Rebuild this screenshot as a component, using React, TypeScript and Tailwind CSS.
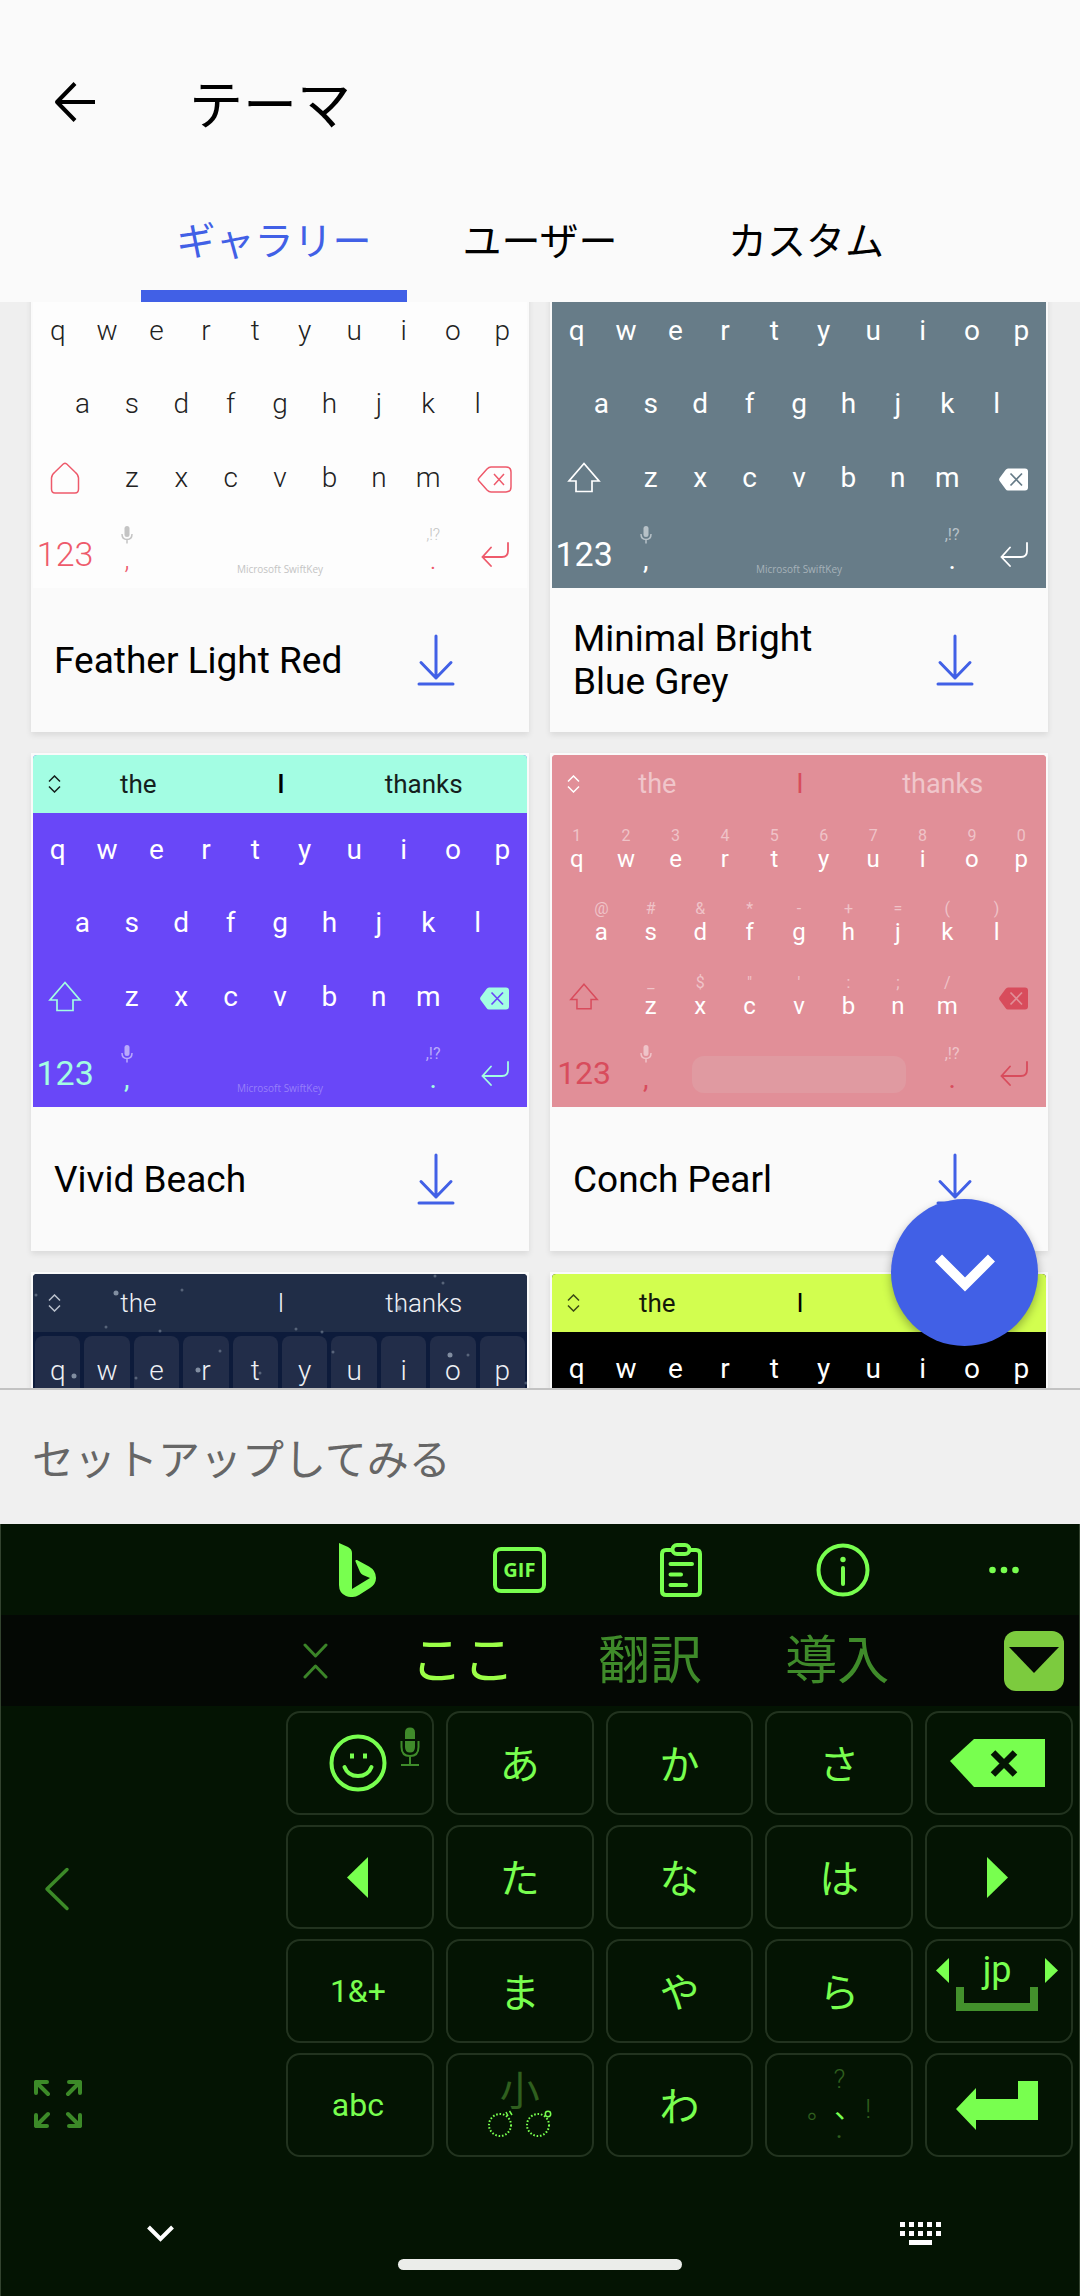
import type { ReactNode } from "react";

const latin = "font-[Roboto,'Noto_Sans_CJK_JP',sans-serif]";
const japanese = "font-['Noto_Sans_CJK_JP',Roboto,sans-serif]";

type Theme = {
  name: string;
  board: string;
  bar: string;
  keys: string;
  accent: string;
  candidate: string;
  middle: string;
  chevron: string;
  hint: string;
  brand: string;
  fill: string;
  outlined?: boolean;
  hints?: boolean;
  tiles?: boolean;
  snow?: boolean;
  /** Which part of the card the current scroll position leaves in view. */
  view: "bottom" | "all" | "top";
};

const themes: Theme[] = [
  {
    name: "Feather Light Red",
    board: "bg-[#fdfdfd]",
    bar: "bg-[#fdfdfd]",
    keys: "text-[#222222] font-light",
    accent: "text-[#ee5a6b] font-light",
    candidate: "text-[#222222]",
    middle: "text-[#ee5a6b]",
    chevron: "text-[#222222]",
    hint: "text-[#c4c4c4]",
    brand: "text-[#c4c4c4]",
    fill: "fill-none stroke-[#ee5a6b]",
    outlined: true,
    view: "bottom",
  },
  {
    name: "Minimal Bright Blue Grey",
    board: "bg-[#677c88]",
    bar: "bg-[#677c88]",
    keys: "text-white",
    accent: "text-white",
    candidate: "text-white",
    middle: "text-white",
    chevron: "text-white",
    hint: "text-[#b7c1c7]",
    brand: "text-[#a6b2b9]",
    fill: "stroke-[#677c88]",
    view: "bottom",
  },
  {
    name: "Vivid Beach",
    board: "bg-[#6947f8]",
    bar: "bg-[#a3fde3]",
    keys: "text-white",
    accent: "text-[#a3fde3]",
    candidate: "text-[#14201d]",
    middle: "text-black font-medium",
    chevron: "text-[#14201d]",
    hint: "text-[#b9a9fb]",
    brand: "text-[#977ffa]",
    fill: "stroke-[#6947f8]",
    view: "all",
  },
  {
    name: "Conch Pearl",
    board: "bg-[#e18f98]",
    bar: "bg-[#e18f98]",
    keys: "text-white",
    accent: "text-[#d84c5c]",
    candidate: "text-[#f0c6cb]",
    middle: "text-[#d84c5c]",
    chevron: "text-white",
    hint: "text-[#efc3c8]",
    brand: "text-[#e29aa1]",
    fill: "stroke-[#e18f98]",
    hints: true,
    view: "all",
  },
  {
    name: "Starry Night",
    board: "bg-[#0d1b3b]",
    bar: "bg-[#202d47]",
    keys: "text-[#eef0f4] font-light",
    accent: "text-[#eef0f4] font-light",
    candidate: "text-[#eef0f4] font-light",
    middle: "text-[#eef0f4] font-light",
    chevron: "text-[#b9c0cc]",
    hint: "text-[#8a93a6]",
    brand: "text-[#8a93a6]",
    fill: "stroke-[#0d1b3b]",
    tiles: true,
    snow: true,
    view: "top",
  },
  {
    name: "Lime Punch",
    board: "bg-black",
    bar: "bg-[#d2fe4f]",
    keys: "text-white",
    accent: "text-[#d2fe4f]",
    candidate: "text-[#14180a]",
    middle: "text-black",
    chevron: "text-[#3c4a16]",
    hint: "text-[#8c8c8c]",
    brand: "text-[#8c8c8c]",
    fill: "stroke-black",
    view: "top",
  },
];

const specks = [
  [83, 19, 2], [149, 16, 1], [73, 53, 1], [127, 57, 1], [263, 55, 1], [289, 58, 1], [187, 77, 1], [300, 78, 1],
  [417, 81, 2], [435, 81, 1], [41, 102, 2], [165, 96, 2], [227, 99, 1], [103, 104, 1], [402, 2, 1], [410, 9, 1],
  [366, 34, 2], [3, 21, 1], [493, 109, 1],
];

function DownloadIcon() {
  return (
    <svg width="38" height="52" viewBox="0 0 38 52" fill="none" stroke="currentColor" strokeWidth="3" strokeLinecap="round" strokeLinejoin="round" aria-hidden="true">
      <path d="M19 2V44M4 28.500L19 44L34 28.500" />
      <path d="M2 50H36" />
    </svg>
  );
}

function ShiftIcon({ theme }: { theme: Theme }) {
  if (theme.outlined) {
    return (
      <svg width="30" height="32" viewBox="0 0 30 32" fill="none" stroke="currentColor" strokeWidth="1.500" aria-hidden="true">
        <path d="M13.500 1.800Q15 .8 16.500 1.800L25 10Q28.500 13 28.500 16V27Q28.500 31 25 31H5Q1.500 31 1.500 27V16Q1.500 13 5 10Z" />
      </svg>
    );
  }
  return (
    <svg width="34" height="31" viewBox="0 0 34 31" className={theme.hints ? "w-[30px]" : ""} fill="none" stroke="currentColor" strokeWidth="1.700" aria-hidden="true">
      <path d="M17 1.500L32 19H25V29.500H9V19H2Z" />
    </svg>
  );
}

function EraseIcon({ theme }: { theme: Theme }) {
  if (theme.outlined) {
    return (
      <svg width="35" height="27" viewBox="0 0 35 27" fill="none" stroke="currentColor" strokeWidth="1.500" aria-hidden="true">
        <path d="M14 1H29Q34 1 34 6V21Q34 26 29 26H14Q12 26 10 24L2 15Q.5 13.500 2 12L10 3Q12 1 14 1Z" />
        <path d="M17 8L27 19M27 8L17 19" />
      </svg>
    );
  }
  return (
    <svg width="29" height="23" viewBox="0 0 29 23" className={theme.fill} strokeWidth="1.700" aria-hidden="true">
      <path d="M9 .5H26Q29 .5 29 3.500V19.500Q29 22.500 26 22.500H9Q7.500 22.500 6.500 21L.6 13Q-.4 11.500 .6 10L6.500 2Q7.500 .5 9 .5Z" fill="currentColor" stroke="none" />
      <path d="M11.500 5.500L23 17.500M23 5.500L11.500 17.500" />
    </svg>
  );
}

function ReturnIcon() {
  return (
    <svg width="28" height="25" viewBox="0 0 28 25" fill="none" stroke="currentColor" strokeWidth="1.800" strokeLinecap="round" aria-hidden="true">
      <path d="M27 1V9Q27 15 21 15H1.500M10 5.500L1.500 15L10 24" />
    </svg>
  );
}

function SmallMic() {
  return (
    <svg width="12" height="18" viewBox="0 0 12 18" aria-hidden="true">
      <rect x="3.500" y="0" width="5" height="11" rx="2.500" fill="currentColor" />
      <path d="M1 8Q1 13.500 6 13.500Q11 13.500 11 8M6 13.500V17.500" fill="none" stroke="currentColor" strokeWidth="1.500" />
    </svg>
  );
}

function Letter({ letter, hint, theme }: { letter: string; hint?: string; theme: Theme }) {
  if (theme.hints) {
    return (
      <span className="flex flex-1 flex-col items-center justify-center">
        <span className={`text-base leading-[18px] ${theme.hint}`}>{hint}</span>
        <span className="text-2xl leading-7">{letter}</span>
      </span>
    );
  }
  return (
    <span className={`flex flex-1 items-center justify-center text-[28px] leading-8 ${theme.tiles ? "mx-0.5 mt-1 rounded-t-lg bg-[#222d49]" : ""}`}>
      {letter}
    </span>
  );
}

function Letters({ text, hints, theme }: { text: string; hints: string; theme: Theme }) {
  return (
    <>
      {text.split("").map((letter, i) => (
        <Letter key={letter} letter={letter} hint={hints[i]} theme={theme} />
      ))}
    </>
  );
}

function CandidateBar({ theme }: { theme: Theme }) {
  return (
    <div className={`flex h-[58px] items-center ${theme.bar} ${theme.hints ? "text-[27px]" : "text-[26px]"}`}>
      <span className={`flex w-[34px] justify-end pr-1.5 ${theme.chevron}`}>
        <svg width="13" height="18" viewBox="0 0 13 18" fill="none" stroke="currentColor" strokeWidth="1.500" aria-hidden="true">
          <path d="M1 6.500L6.500 1L12 6.500M1 11.500L6.500 17L12 11.500" />
        </svg>
      </span>
      <span className={`flex-1 text-center ${theme.candidate}`}>the</span>
      <span className={`flex-1 text-center ${theme.middle}`}>I</span>
      <span className={`flex-1 text-center ${theme.candidate}`}>thanks</span>
      <span className="w-8" />
    </div>
  );
}

function LowerRows({ theme }: { theme: Theme }) {
  return (
    <>
      <div className="flex flex-1 px-[5%]">
        <Letters text="asdfghjkl" hints="@#&*-+=()" theme={theme} />
      </div>
      <div className="flex flex-1">
        <span className={`mr-[2%] flex w-[13%] items-center justify-center ${theme.accent}`}>
          <ShiftIcon theme={theme} />
        </span>
        <Letters text="zxcvbnm" hints={"_$\"':;/"} theme={theme} />
        <span className={`ml-[2%] flex w-[13%] items-center justify-center pt-1 ${theme.accent}`}>
          <EraseIcon theme={theme} />
        </span>
      </div>
      <div className="flex flex-1">
        <span className={`flex w-[13%] items-center justify-center pt-1.5 ${theme.hints ? "text-[32px]" : "text-[34px]"} ${theme.accent}`}>123</span>
        <span className="flex w-[12%] flex-col items-center justify-center">
          <span className={theme.hint}><SmallMic /></span>
          <span className={`text-[28px] leading-8 ${theme.accent}`}>,</span>
        </span>
        {theme.hints ? (
          <span className="mx-[17px] mt-[22px] mb-3.5 flex-1 rounded-xl bg-[#e09aa1]" />
        ) : (
          <span className={`flex flex-1 items-end justify-center pb-3 font-['Open_Sans',sans-serif] text-[10px] leading-[14px] font-normal ${theme.brand}`}>
            Microsoft SwiftKey
          </span>
        )}
        <span className="flex w-[12%] flex-col items-center justify-center">
          <span className={`text-base leading-[18px] ${theme.hint}`}>,!?</span>
          <span className={`text-[28px] leading-8 ${theme.accent}`}>.</span>
        </span>
        <span className={`flex w-[13%] items-center justify-center pt-1.5 ${theme.accent}`}>
          <ReturnIcon />
        </span>
      </div>
    </>
  );
}

function Preview({ theme }: { theme: Theme }) {
  return (
    <div className={`relative flex h-[352px] flex-col overflow-hidden rounded-t ${theme.board} ${theme.keys}`}>
      {theme.view === "bottom" ? <div className={`h-[58px] ${theme.bar}`} /> : <CandidateBar theme={theme} />}
      <div className={theme.view === "top" ? "flex h-[74px]" : "flex flex-1"}>
        <Letters text="qwertyuiop" hints="1234567890" theme={theme} />
      </div>
      {theme.view !== "top" && <LowerRows theme={theme} />}
      {theme.snow && (
        <svg className="absolute inset-0 h-full w-full" aria-hidden="true">
          {specks.map(([x, y, r]) => (
            <circle key={`${x}-${y}`} cx={x} cy={y} r={r + 0.5} fill="#aab6c6" opacity={r > 1 ? 0.7 : 0.4} />
          ))}
        </svg>
      )}
    </div>
  );
}

function ThemeCard({ theme }: { theme: Theme }) {
  return (
    <article aria-label={theme.name} className="flex h-[498px] flex-col bg-[#fafafa] p-0.5 pb-0 shadow-[0_3px_6px_rgba(0,0,0,0.09)]">
      <Preview theme={theme} />
      {theme.view !== "top" && (
        <div className="flex flex-1 items-center">
          <h2 className="flex-1 pr-8 pl-[21px] text-[37px] leading-[43px] text-black">{theme.name}</h2>
          <button type="button" aria-label={`${theme.name} をダウンロード`} className="mr-[34px] flex h-[114px] w-[114px] items-center justify-center text-[#4160e6]">
            <DownloadIcon />
          </button>
        </div>
      )}
    </article>
  );
}

function Key({ label, children, tone = "text-[#78ff4f]", className = "" }: { label?: string; children: ReactNode; tone?: string; className?: string }) {
  return (
    <button type="button" aria-label={label} className={`flex h-[104px] items-center justify-center rounded-[14px] border-2 border-[#22331f] ${tone} ${className}`}>
      {children}
    </button>
  );
}

function KanaKey({ kana }: { kana: string }) {
  return <Key className="pb-0.5 text-[40px] leading-[48px]">{kana}</Key>;
}

const tools: { label: string; icon: ReactNode }[] = [
  {
    label: "Bing",
    icon: (
      <svg width="37" height="54" viewBox="0 0 37 54" fill="currentColor" aria-hidden="true">
        <path d="M0 0L9 4Q13 6 13 10V46L31 35L24 32Q22 31 21 29L16.500 18.500Q16 16.500 18 17L30 23.500Q37 27.500 37 35Q37 41 31 45L20 52Q14 55.500 7 53Q0 50 0 42Z" />
      </svg>
    ),
  },
  {
    label: "GIF",
    icon: (
      <span className="flex h-[46px] w-[53px] items-center justify-center rounded-lg border-4 border-[#78ff4f] font-['Open_Sans',sans-serif] text-xl leading-6 font-bold">
        GIF
      </span>
    ),
  },
  {
    label: "クリップボード",
    icon: (
      <svg width="42" height="54" viewBox="0 0 42 54" fill="none" stroke="currentColor" strokeWidth="4" strokeLinejoin="round" strokeLinecap="round" aria-hidden="true">
        <path d="M12 7H6Q2 7 2 11V48Q2 52 6 52H36Q40 52 40 48V11Q40 7 36 7H30" />
        <rect x="12.500" y="2" width="17" height="9" rx="4.500" />
        <path d="M10.500 21H32M10.500 31.500H21M10.500 42H26" />
      </svg>
    ),
  },
  {
    label: "情報",
    icon: (
      <svg width="54" height="54" viewBox="0 0 54 54" fill="none" stroke="currentColor" strokeWidth="4" strokeLinecap="round" aria-hidden="true">
        <circle cx="27" cy="27" r="24.500" />
        <path d="M27 25V41" />
        <circle cx="27" cy="16.500" r="2.700" fill="currentColor" stroke="none" />
      </svg>
    ),
  },
  {
    label: "その他",
    icon: (
      <svg width="30" height="8" viewBox="0 0 30 8" fill="currentColor" aria-hidden="true">
        <circle cx="3.500" cy="4" r="3.300" />
        <circle cx="15" cy="4" r="3.300" />
        <circle cx="26.500" cy="4" r="3.300" />
      </svg>
    ),
  },
];

function Keyboard() {
  return (
    <section aria-label="キーボード" className={`border-x border-[#33432f] bg-[#041403] text-[#78ff4f] ${japanese}`}>
      <div className="-mr-1.5 grid h-[91px] grid-cols-5 pl-[276px]">
        {tools.map((tool) => (
          <button key={tool.label} type="button" aria-label={tool.label} className="flex items-center justify-center">
            {tool.icon}
          </button>
        ))}
      </div>

      <div className="flex h-[91px] items-center bg-[#040804] pl-[276px]">
        <button type="button" aria-label="候補を閉じる" className="w-[92px] pl-[26px] text-[#3b8428]">
          <svg width="25" height="36" viewBox="0 0 25 36" fill="none" stroke="currentColor" strokeWidth="3" strokeLinecap="round" strokeLinejoin="round" aria-hidden="true">
            <path d="M2 2L12.500 13L23 2M2 34L12.500 23L23 34" />
          </svg>
        </button>
        <div className="grid flex-1 grid-cols-3 pb-2 text-[52px] leading-[64px] text-[#3f8b2a]">
          <button type="button" className="text-[#9bff47]">ここ</button>
          <button type="button">翻訳</button>
          <button type="button">導入</button>
        </div>
        <div className="flex w-[148px] justify-end pr-[15px]">
          <button type="button" aria-label="候補を展開" className="flex h-[60px] w-[60px] justify-center rounded-xl bg-[#7ccb3e] pt-4">
            <svg width="50" height="26" viewBox="0 0 50 26" fill="#040804" aria-hidden="true">
              <path d="M0 0H50L25 26Z" />
            </svg>
          </button>
        </div>
      </div>

      <div className="flex pt-[5px]">
        <div className="flex w-[285px] flex-col justify-end gap-[169px] pb-[29px] text-[#3c8a28]">
          <button type="button" aria-label="左に移動" className="ml-[43px] self-start">
            <svg width="26" height="44" viewBox="0 0 26 44" fill="none" stroke="currentColor" strokeWidth="3.500" strokeLinecap="round" strokeLinejoin="round" aria-hidden="true">
              <path d="M23 2.500L3 22L23 41.500" />
            </svg>
          </button>
          <button type="button" aria-label="全画面に広げる" className="ml-[33px] self-start">
            <svg width="48" height="48" viewBox="0 0 48 48" fill="none" stroke="currentColor" strokeWidth="4" strokeLinecap="round" strokeLinejoin="round" aria-hidden="true">
              <path d="M2 13V2H13M2 2L14 14M35 2H46V13M46 2L34 14M2 35V46H13M2 46L14 34M35 46H46V35M46 46L34 34" />
            </svg>
          </button>
        </div>
        <div className="mr-1.5 grid flex-1 grid-cols-5 gap-x-3 gap-y-2.5">
          <Key label="絵文字" className="relative pr-1">
            <svg width="58" height="58" viewBox="0 0 58 58" fill="none" stroke="currentColor" strokeWidth="4" strokeLinecap="round" aria-hidden="true">
              <circle cx="29" cy="29" r="26.500" />
              <path d="M15.500 33Q19 42 29 42Q39 42 42.500 33" />
              <path d="M21 19.500H25V24.500H21ZM34 19.500H38V24.500H34Z" fill="currentColor" stroke="none" />
            </svg>
            <svg width="20" height="40" viewBox="0 0 20 40" className="absolute top-3.5 right-3 text-[#3f8b2a]" fill="none" stroke="currentColor" strokeWidth="2" aria-hidden="true">
              <path d="M5 12V5.500Q5 .5 10 .5Q15 .5 15 5.500V12ZM5 14H15V20Q15 25.500 10 25.500Q5 25.500 5 20Z" fill="currentColor" stroke="none" />
              <path d="M1.500 14V20Q1.500 29 10 29Q18.500 29 18.500 20V14M10 29V38M1 38H19" />
            </svg>
          </Key>
          <KanaKey kana="あ" />
          <KanaKey kana="か" />
          <KanaKey kana="さ" />
          <Key label="削除" className="pr-1">
            <svg width="95" height="48" viewBox="0 0 95 48" aria-hidden="true">
              <path d="M24 0H95V48H24L0 22Z" fill="currentColor" />
              <path d="M43 13.500L65 35.500M65 13.500L43 35.500" stroke="#041403" strokeWidth="6.500" />
            </svg>
          </Key>

          <Key label="左" className="pr-1">
            <svg width="21" height="41" viewBox="0 0 21 41" fill="currentColor" aria-hidden="true"><path d="M21 0V41L0 20.500Z" /></svg>
          </Key>
          <KanaKey kana="た" />
          <KanaKey kana="な" />
          <KanaKey kana="は" />
          <Key label="右" className="pr-1">
            <svg width="21" height="41" viewBox="0 0 21 41" fill="currentColor" aria-hidden="true"><path d="M0 0V41L21 20.500Z" /></svg>
          </Key>

          <Key className={`pr-1 text-[32px] ${latin}`}>1&amp;+</Key>
          <KanaKey kana="ま" />
          <KanaKey kana="や" />
          <KanaKey kana="ら" />
          <Key label="jp スペース" className={`flex-col pr-1 pb-[18px] ${latin}`}>
            <span className="flex w-[122px] items-center justify-between">
              <svg width="13" height="25" viewBox="0 0 13 25" fill="currentColor" aria-hidden="true"><path d="M13 0V25L0 12.500Z" /></svg>
              <span className="text-[36px] leading-[34px]">jp</span>
              <svg width="13" height="25" viewBox="0 0 13 25" fill="currentColor" aria-hidden="true"><path d="M0 0V25L13 12.500Z" /></svg>
            </span>
            <span className="h-6 w-[82px] border-8 border-t-0 border-[#43912c]" />
          </Key>

          <Key className={`pr-1 text-[32px] ${latin}`}>abc</Key>
          <Key label="小文字・濁点" className="flex-col pb-1.5">
            <span className="text-[40px] leading-[44px] text-[#2f5f1e]">小</span>
            <svg width="64" height="28" viewBox="0 0 64 28" fill="none" stroke="currentColor" aria-hidden="true">
              <circle cx="12" cy="15" r="11" strokeWidth="2" strokeDasharray="1.600 1.800" />
              <circle cx="50" cy="15" r="11" strokeWidth="2" strokeDasharray="1.600 1.800" />
              <path d="M18 2L20 6M21.500 1L24 5" strokeWidth="1.500" />
              <circle cx="60" cy="4" r="2.700" strokeWidth="1.500" />
            </svg>
          </Key>
          <KanaKey kana="わ" />
          <Key label="句読点" tone="text-[#2f5f1e]" className="flex-col pb-2.5">
            <span className={`text-[26px] leading-[30px] font-light ${latin}`}>?</span>
            <span className="flex items-baseline gap-[3px] text-2xl leading-6">
              <span>。</span>
              <span className="text-[28px] leading-6 text-[#78ff4f]">、</span>
              <span className={`text-[26px] leading-6 font-light ${latin}`}>!</span>
            </span>
            <span className={`text-[26px] leading-4 ${latin}`}>.</span>
          </Key>
          <Key label="改行" className="pr-1">
            <svg width="82" height="49" viewBox="0 0 82 49" fill="currentColor" aria-hidden="true">
              <path d="M62 0H82V39H20V49L0 28L20 7V18H62Z" />
            </svg>
          </Key>
        </div>
      </div>

      <nav aria-label="システム" className="flex flex-col items-center pt-16 pb-[26px] text-white">
        <div className="flex w-full items-center justify-between pr-[138px] pl-[146px]">
          <button type="button" aria-label="キーボードを閉じる">
            <svg width="27" height="24" viewBox="0 0 27 24" fill="none" stroke="currentColor" strokeWidth="4" aria-hidden="true">
              <path d="M1.500 6L13.500 18L25.500 6" />
            </svg>
          </button>
          <button type="button" aria-label="入力方法を選択">
            <svg width="41" height="24" viewBox="0 0 41 24" fill="currentColor" aria-hidden="true">
              <path d="M0 1h5v5H0zM9 1h5v5H9zM18 1h5v5h-5zM27 1h5v5h-5zM36 1h5v5h-5zM0 10h5v5H0zM9 10h5v5H9zM18 10h5v5h-5zM27 10h5v5h-5zM36 10h5v5h-5zM9 19h23v5H9z" />
            </svg>
          </button>
        </div>
        <span className="mt-3.5 h-[11px] w-[284px] rounded-full bg-[#ebedea]" />
      </nav>
    </section>
  );
}

export default function App() {
  return (
    <div className={`flex h-screen flex-col bg-[#f0f0f0] ${latin}`}>
      <header className={`bg-[#fafafa] text-black ${japanese}`}>
        <div className="flex h-[178px] items-center pt-[26px] pl-[54px]">
          <button type="button" aria-label="戻る">
            <svg width="42" height="40" viewBox="0 0 42 40" fill="none" stroke="currentColor" strokeWidth="4" strokeLinejoin="round" aria-hidden="true">
              <path d="M41 20H3M21 1.500L3 20L21 38.500" />
            </svg>
          </button>
          <h1 className="ml-[93px] text-[54px] leading-[64px]">テーマ</h1>
        </div>
        <nav className="flex h-[124px] justify-center text-[39px]">
          <a href="#gallery" aria-current="page" className="flex w-[266px] items-center justify-center border-b-[12px] border-[#4160e6] pt-2 text-[#4160e6]">ギャラリー</a>
          <a href="#user" className="flex w-[266px] items-center justify-center pb-1">ユーザー</a>
          <a href="#custom" className="flex w-[266px] items-center justify-center pb-1">カスタム</a>
        </nav>
      </header>

      <main className="relative min-h-0 flex-1 overflow-hidden bg-[#efefef]">
        <div className="-mt-[68px] grid grid-cols-2 gap-[21px] pr-8 pl-[31px]">
          {themes.map((theme) => (
            <ThemeCard key={theme.name} theme={theme} />
          ))}
        </div>
        <button type="button" aria-label="下へ" className="absolute right-[42px] bottom-[42px] flex h-[147px] w-[147px] items-center justify-center rounded-full bg-[#4160e6] text-white shadow-[0_4px_10px_rgba(0,0,0,0.3)]">
          <svg width="60" height="38" viewBox="0 0 60 38" fill="none" stroke="currentColor" strokeWidth="10" aria-hidden="true">
            <path d="M3.500 4L30 30.500L56.500 4" />
          </svg>
        </button>
      </main>

      <div className={`flex h-[136px] items-center border-t-2 border-[#c2c2c2] px-8 ${japanese}`}>
        <input type="text" aria-label="セットアップしてみる" placeholder="セットアップしてみる" className="w-full bg-transparent text-[42px] leading-[60px] outline-none placeholder:text-[#666666]" />
      </div>

      <Keyboard />
    </div>
  );
}
